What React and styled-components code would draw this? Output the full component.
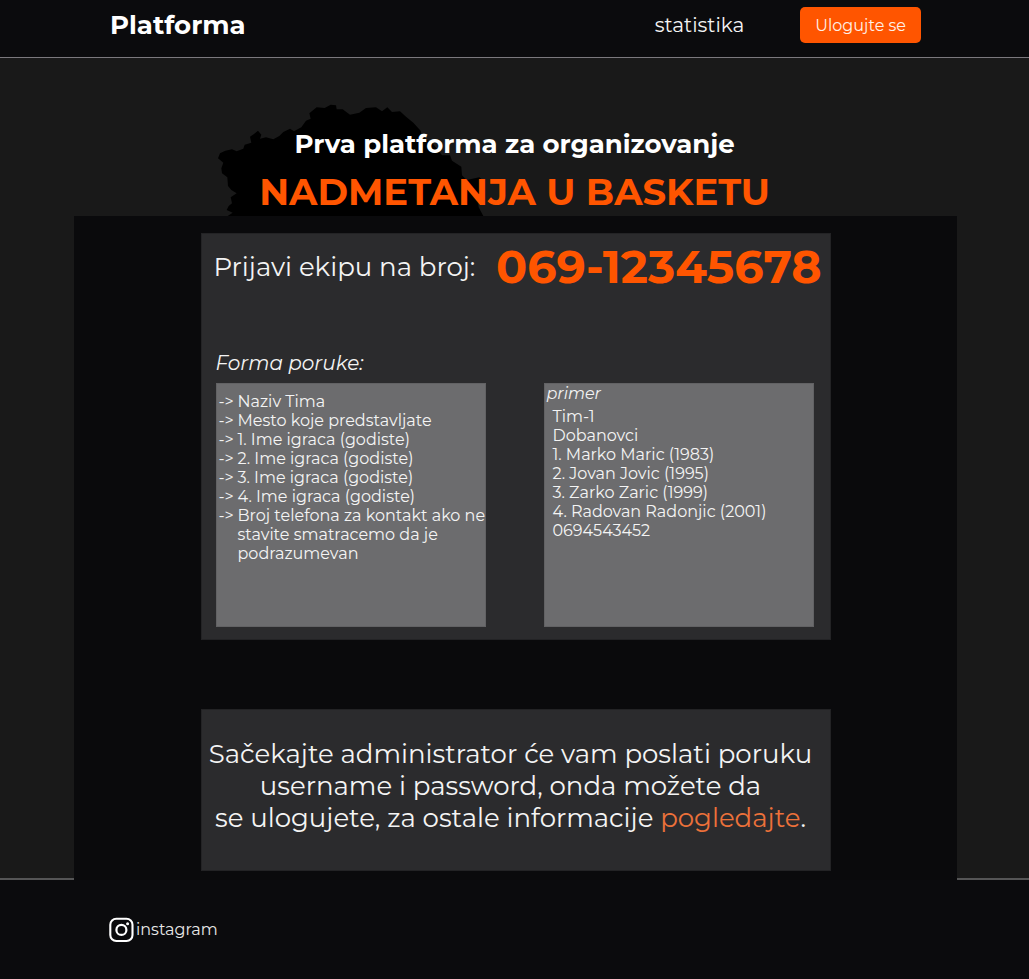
import React from 'react';
import styled, { createGlobalStyle } from 'styled-components';

const GlobalStyle = createGlobalStyle`
  * { box-sizing: border-box; }
  body {
    margin: 0;
    background: #0b0b0d;
    color: #f4f4f4;
    font-family: Montserrat, Inter, "Liberation Sans", sans-serif;
  }
  #root {
    min-height: 100vh;
    display: flex;
    flex-direction: column;
  }
`;

const Header = styled.header`
  display: flex;
  align-items: center;
  padding: 7px 108px 14px 110px;
  border-bottom: 1px solid #7b787d;
  background: #0b0b0d;
`;

const Brand = styled.a`
  font-size: 26px;
  line-height: 36px;
  font-weight: 700;
  color: #fff;
  text-decoration: none;
`;

const Nav = styled.nav`
  display: flex;
  align-items: center;
  gap: 56px;
  margin-left: auto;
`;

const NavLink = styled.a`
  font-size: 20px;
  line-height: 36px;
  color: #f4f4f4;
  text-decoration: none;
`;

const LoginButton = styled.button`
  height: 36px;
  padding: 0 15px;
  border: 0;
  border-radius: 5px;
  background: #ff5500;
  color: #fff0e8;
  font: inherit;
  font-size: 16px;
  cursor: pointer;
`;

const Main = styled.main`
  flex: 1;
  display: flex;
  flex-direction: column;
  background: #191919;
`;

const Hero = styled.section`
  position: relative;
  width: 100%;
  max-width: 630px;
  margin: 0 auto;
  padding: 68px 0 0;
  text-align: center;
`;

const MapShape = styled.svg`
  position: absolute;
  left: 18px;
  bottom: 0;
  width: 267px;
  height: 112px;
`;

const Title = styled.h1`
  position: relative;
  margin: 0;
  font-weight: 700;
`;

const TitleLead = styled.span`
  display: block;
  font-size: 26px;
  line-height: 36px;
  color: #fff;
`;

const TitleAccent = styled.span`
  display: block;
  margin-top: 6px;
  font-size: 37px;
  line-height: 48px;
  color: #ff5500;
`;

const Panel = styled.div`
  position: relative;
  flex: 1;
  display: flex;
  flex-direction: column;
  align-items: center;
  gap: 69px;
  margin: 0 72px -2px 74px;
  padding: 17px 16px 9px;
  background: #0a0a0c;
`;

const Card = styled.section`
  width: 100%;
  max-width: 630px;
  border: 1px solid #232325;
  background: #2b2b2d;
`;

const SignupCard = styled(Card)`
  padding: 9px 16px 12px 14px;
`;

const PhoneRow = styled.p`
  display: flex;
  justify-content: space-between;
  align-items: center;
  margin: 0 -8px 0 -2px;
  font-size: 26px;
  line-height: 48px;
`;

const Phone = styled.strong`
  font-size: 46px;
  font-weight: 700;
  color: #ff5500;
`;

const FormHeading = styled.h2`
  margin: 59px 0 6px;
  font-size: 20px;
  line-height: 27px;
  font-style: italic;
  font-weight: 400;
`;

const Boxes = styled.div`
  display: grid;
  grid-template-columns: repeat(2, minmax(0, 1fr));
  gap: 58px;
`;

const MessageBox = styled.div`
  min-height: 244px;
  border: 1px solid #626264;
  background: #6c6c6e;
  font-size: 16px;
  line-height: 19px;
`;

const FieldList = styled.ul`
  margin: 0;
  padding: 8px 0 0 2px;
  list-style: none;
`;

const Field = styled.li`
  display: grid;
  grid-template-columns: 19px 1fr;
  white-space: pre;

  &::before { content: "->"; }
`;

const SampleLabel = styled.h3`
  margin: 0 0 4px 2px;
  font-size: 16px;
  line-height: 19px;
  font-style: italic;
  font-weight: 400;
`;

const SampleList = styled.ul`
  margin: 0;
  padding: 0 0 0 8px;
  list-style: none;
`;

const InfoCard = styled(Card)`
  padding: 28px 14px 36px 4px;
  text-align: center;
`;

const InfoText = styled.p`
  margin: 0;
  font-size: 26px;
  line-height: 32px;
`;

const InfoLine = styled.span`
  display: block;
`;

const InfoLink = styled.a`
  color: #ec713a;
  text-decoration: none;
`;

const Footer = styled.footer`
  padding: 37px 110px 36px 109px;
  border-top: 2px solid #555556;
  background: #0b0b0d;
`;

const SocialLink = styled.a`
  display: flex;
  width: fit-content;
  align-items: center;
  gap: 2px;
  font-size: 16px;
  line-height: 26px;
  color: #e8e8e8;
  text-decoration: none;
`;

const InstagramIcon = () => (
  <svg width="25" height="26" viewBox="0 0 25 26" fill="none" aria-hidden="true">
    <rect x="1.3" y="1.8" width="22.2" height="22.2" rx="6" stroke="#fff" strokeWidth="2.1" />
    <circle cx="12.4" cy="12.9" r="5" stroke="#fff" strokeWidth="2.2" />
    <circle cx="18.6" cy="6.8" r="1.5" fill="#fff" />
  </svg>
);

const fields = [
  'Naziv Tima',
  'Mesto koje predstavljate',
  '1. Ime igraca (godiste)',
  '2. Ime igraca (godiste)',
  '3. Ime igraca (godiste)',
  '4. Ime igraca (godiste)',
  'Broj telefona za kontakt ako ne\nstavite smatracemo da je\npodrazumevan',
];

const sample = [
  'Tim-1',
  'Dobanovci',
  '1. Marko Maric (1983)',
  '2. Jovan Jovic (1995)',
  '3. Zarko Zaric (1999)',
  '4. Radovan Radonjic (2001)',
  '0694543452',
];

export default function App() {
  return (
    <>
      <GlobalStyle />
      <Header>
        <Brand href="#">Platforma</Brand>
        <Nav>
          <NavLink href="#statistika">statistika</NavLink>
          <LoginButton type="button">Ulogujte se</LoginButton>
        </Nav>
      </Header>
      <Main>
        <Hero>
          <MapShape viewBox="56 42 801 336" preserveAspectRatio="none" aria-hidden="true">
            <path d="M85 378 L100 368 L82 360 L88 348 L98 340 L94 322 L112 310 L96 300 L86 288 L84 262 L68 250 L66 235 L72 218 L56 205 L62 190 L78 182 L98 178 L112 184 L132 176 L136 164 L156 158 L152 140 L164 132 L176 122 L186 134 L182 146 L200 142 L222 148 L240 138 L252 126 L272 116 L284 124 L306 112 L320 92 L334 86 L330 70 L352 52 L376 54 L394 44 L410 46 L412 58 L430 58 L452 74 L480 68 L500 54 L530 52 L548 64 L564 52 L578 66 L602 64 L620 80 L642 98 L664 122 L668 140 L700 160 L728 196 L752 196 L758 212 L786 230 L788 256 L802 270 L840 262 L850 270 L842 288 L850 304 L834 320 L838 352 L852 378 Z" />
          </MapShape>
          <Title>
            <TitleLead>Prva platforma za organizovanje</TitleLead>
            <TitleAccent>NADMETANJA U BASKETU</TitleAccent>
          </Title>
        </Hero>
        <Panel>
          <SignupCard>
            <PhoneRow>
              Prijavi ekipu na broj: <Phone>069-12345678</Phone>
            </PhoneRow>
            <FormHeading>Forma poruke:</FormHeading>
            <Boxes>
              <MessageBox>
                <FieldList>
                  {fields.map((text) => (
                    <Field key={text}>{text}</Field>
                  ))}
                </FieldList>
              </MessageBox>
              <MessageBox>
                <SampleLabel>primer</SampleLabel>
                <SampleList>
                  {sample.map((text) => (
                    <li key={text}>{text}</li>
                  ))}
                </SampleList>
              </MessageBox>
            </Boxes>
          </SignupCard>
          <InfoCard>
            <InfoText>
              <InfoLine>Sačekajte administrator će vam poslati poruku</InfoLine>
              <InfoLine>username i password, onda možete da</InfoLine>
              <InfoLine>
                se ulogujete, za ostale informacije <InfoLink href="#info">pogledajte</InfoLink>.
              </InfoLine>
            </InfoText>
          </InfoCard>
        </Panel>
      </Main>
      <Footer>
        <SocialLink href="#instagram">
          <InstagramIcon />
          instagram
        </SocialLink>
      </Footer>
    </>
  );
}
